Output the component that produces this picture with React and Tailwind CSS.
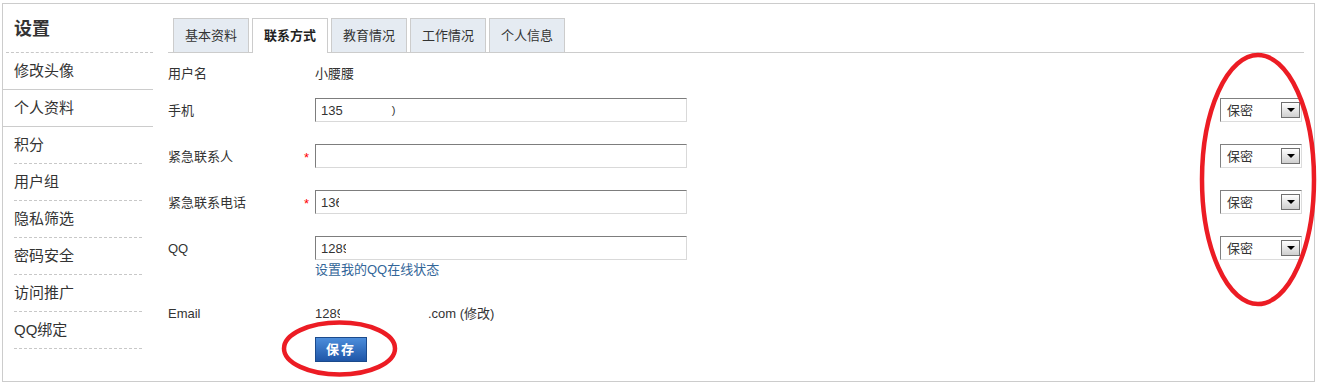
import React from "react";

const font = "font-['Liberation_Sans','Noto_Sans_CJK_SC',sans-serif]";

function Select() {
  return (
    <div className="ml-auto mr-[2px] w-[82px] h-6 flex items-center justify-between pl-[6px] pr-px border border-t-[#808080] border-l-[#808080] border-r-[#dcdcdc] border-b-[#dcdcdc] bg-white">
      <span className="text-[13px] text-[#333] leading-none">保密</span>
      <span className="w-[19px] h-[16px] border border-[#707070] bg-gradient-to-b from-white to-[#cfcfcf] flex items-center justify-center">
        <span className="w-0 h-0 border-l-[4px] border-r-[4px] border-t-[4px] border-l-transparent border-r-transparent border-t-black" />
      </span>
    </div>
  );
}

function Input({ children }) {
  return (
    <div className="w-[372px] h-6 border border-t-[#7d7d7d] border-l-[#7d7d7d] border-r-[#d9d9d9] border-b-[#d9d9d9] bg-white flex items-center pl-[5px] text-[13px] text-[#333] leading-none overflow-hidden whitespace-nowrap">
      {children}
    </div>
  );
}

function Row({ label, star, children, select = true, className = "" }) {
  return (
    <div className={"flex items-center h-6 " + className}>
      <span className="w-[136px] text-[13px] text-[#333] leading-none">{label}</span>
      <span className="w-[11px] text-[13px] text-[#f00] leading-none pt-[3px]">{star ? "*" : ""}</span>
      {children}
      {select && <Select />}
    </div>
  );
}

export default function App() {
  const navItems = ["积分", "用户组", "隐私筛选", "密码安全", "访问推广", "QQ绑定"];
  const tabs = ["基本资料", "联系方式", "教育情况", "工作情况", "个人信息"];
  return (
    <div className={"relative w-[1319px] h-[387px] bg-white pl-[2px] pt-[3px] " + font}>
      <div className="w-[1313px] h-[379px] border border-[#cccccc] flex">
        {/* Sidebar */}
        <div className="w-[150px] shrink-0 text-[#333]">
          <div className="h-[49px] ml-[3px] pl-[8px] flex items-center border-b border-dashed border-[#c8c8c8] text-[18px] font-bold pt-[2px]">
            设置
          </div>
          <div className="h-[37px] pl-[11px] pt-px flex items-center border-b border-[#cccccc] text-[15px]">修改头像</div>
          <div className="h-[37px] pl-[11px] pt-px flex items-center border-b border-[#cccccc] text-[15px]">个人资料</div>
          {navItems.map((t) => (
            <div key={t} className="h-[37px] mx-[11px] pt-px flex items-center border-b border-dashed border-[#c8c8c8] text-[15px]">
              {t}
            </div>
          ))}
        </div>

        {/* Main */}
        <div className="flex-1 ml-[15px] mr-[10px] pt-[14px]">
          <div className="flex items-end gap-[3px] pl-[5px] h-[35px] border-b border-[#cccccc]">
            {tabs.map((t, i) =>
              i === 1 ? (
                <div key={t} className="h-[35px] -mb-px px-[11px] flex items-center border border-b-0 border-[#cccccc] bg-white text-[13px] font-bold text-[#222]">
                  {t}
                </div>
              ) : (
                <div key={t} className="h-[34px] px-[11px] flex items-center border border-b-0 border-[#cccccc] bg-[#e5ebf2] text-[13px] text-[#333]">
                  {t}
                </div>
              )
            )}
          </div>

          <Row label="用户名" select={false} className="mt-[8px]">
            <span className="text-[13px] text-[#333] leading-none">小腰腰</span>
          </Row>
          <Row label="手机" className="mt-[13px]">
            <Input>
              <span>135</span>
              <span className="ml-[49px] text-[11px]">)</span>
            </Input>
          </Row>
          <Row label="紧急联系人" star className="mt-[22px]">
            <Input />
          </Row>
          <Row label="紧急联系电话" star className="mt-[22px]">
            <Input>
              <span className="inline-block w-[18px] overflow-hidden">136</span>
            </Input>
          </Row>
          <Row label="QQ" className="mt-[22px]">
            <Input>
              <span className="inline-block w-[25px] overflow-hidden">1289</span>
            </Input>
          </Row>
          <div className="pl-[147px] mt-[2px] leading-[16px] text-[13px] text-[#336699]">设置我的QQ在线状态</div>
          <Row label="Email" select={false} className="mt-[23px]">
            <span className="text-[13px] text-[#333] leading-none whitespace-nowrap flex items-center">
              <span className="inline-block w-[25px] overflow-hidden">1289</span>
              <span className="ml-[88px]">.com (修改)</span>
            </span>
          </Row>
          <div className="pl-[147px] mt-[12px]">
            <button className="w-[52px] h-[25px] border border-[#1b4a8c] bg-gradient-to-b from-[#4c8ddb] to-[#1f56a8] text-white text-[13px] font-bold leading-none tracking-[2px] flex items-center justify-center">
              保存
            </button>
          </div>
        </div>
      </div>

      <svg className="absolute inset-0 pointer-events-none" width="1319" height="387">
        <ellipse cx="339.5" cy="348.5" rx="55.5" ry="26" fill="none" stroke="#ec1c24" strokeWidth="4.5" />
        <ellipse cx="1258" cy="179.5" rx="56" ry="124.5" fill="none" stroke="#ec1c24" strokeWidth="4.5" />
      </svg>
    </div>
  );
}
